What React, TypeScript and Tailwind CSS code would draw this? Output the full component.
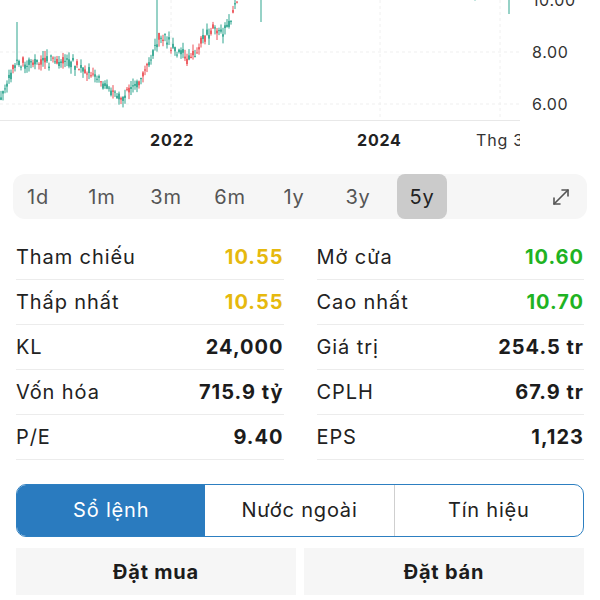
import React from "react";
import { MoveDiagonal } from "lucide-react";

type Candle = { x: number; o: number; c: number; h: number; l: number };

function rng(seed: number) {
  let s = seed;
  return () => {
    s = (s * 1664525 + 1013904223) % 4294967296;
    return s / 4294967296;
  };
}

const keys: [number, number][] = [
  [0, 102], [5, 85], [12, 75], [16, 60], [22, 64], [40, 62], [60, 62], [80, 66],
  [95, 78], [110, 88], [122, 100], [135, 86], [148, 68], [155, 52], [160, 36],
  [168, 40], [176, 48], [186, 60], [195, 56], [202, 42], [212, 30], [222, 34],
  [230, 26], [245, -25], [262, -20], [280, -45], [460, -45], [472, -10], [490, -25],
  [505, -20], [512, -6], [520, -15],
];

function interp(x: number) {
  for (let i = 0; i < keys.length - 1; i++) {
    const [x0, y0] = keys[i];
    const [x1, y1] = keys[i + 1];
    if (x >= x0 && x <= x1) return y0 + ((y1 - y0) * (x - x0)) / (x1 - x0);
  }
  return keys[keys.length - 1][1];
}

const spikes: Record<number, number> = { 17: 22, 157: 0, 261: 0, 471: -5, 509: -5 };
const spikeLow: Record<number, number> = { 261: 22, 509: 14 };

function makeCandles(): Candle[] {
  const r = rng(7);
  const out: Candle[] = [];
  for (let x = 1; x < 520; x += 2) {
    const m = interp(x) + (r() - 0.5) * 8;
    let o = m + (r() - 0.5) * 8;
    let c = m + (r() - 0.5) * 8;
    if (c > o && r() < 0.45) {
      const t = o;
      o = c;
      c = t;
    }
    let h = Math.min(o, c) - r() * 7;
    let l = Math.max(o, c) + r() * 7;
    const sk = Object.keys(spikes).map(Number).find((k) => Math.abs(k - x) <= 1);
    if (sk !== undefined) {
      h = spikes[sk];
      if (spikeLow[sk] !== undefined) l = spikeLow[sk];
    }
    out.push({ x, o, c, h, l });
  }
  return out;
}

const candles = makeCandles();

function Chart() {
  return (
    <div className="flex h-[160px]">
      <div className="relative w-[520px] overflow-hidden">
        <svg width="520" height="121" className="block">
          <line x1="0" y1="52" x2="520" y2="52" stroke="#efefef" strokeDasharray="3 3" />
          <line x1="0" y1="104" x2="520" y2="104" stroke="#efefef" strokeDasharray="3 3" />
          <line x1="171" y1="0" x2="171" y2="120" stroke="#f0f0f0" strokeDasharray="3 3" />
          <line x1="380" y1="0" x2="380" y2="120" stroke="#f0f0f0" strokeDasharray="3 3" />
          <line x1="500" y1="0" x2="500" y2="120" stroke="#f0f0f0" strokeDasharray="3 3" />
          {candles.map((cd, i) => {
            const up = cd.c <= cd.o;
            const col = up ? "#2ea58f" : "#ec4f55";
            const top = Math.min(cd.o, cd.c);
            const bh = Math.max(1, Math.abs(cd.o - cd.c));
            return (
              <g key={i}>
                <line x1={cd.x} x2={cd.x} y1={cd.h} y2={cd.l} stroke={col} strokeWidth="1" />
                <rect x={cd.x - 0.8} y={top} width="1.6" height={bh} fill={col} />
              </g>
            );
          })}
          <line x1="0" y1="120.5" x2="520" y2="120.5" stroke="#e8e8e8" strokeWidth="1" />
        </svg>
        <span className="absolute left-[150px] top-[130px] text-[16px] font-bold leading-[20px] tracking-[0.8px] text-[#222]">2022</span>
        <span className="absolute left-[357px] top-[130px] text-[16px] font-bold leading-[20px] tracking-[0.8px] text-[#222]">2024</span>
        <span className="absolute left-[476px] top-[130px] whitespace-nowrap text-[16px] leading-[20px] tracking-[0.8px] text-[#333]">Thg 3</span>
      </div>
      <div className="relative flex-1 text-[16px] leading-[20px] tracking-[0.6px] text-[#333]">
        <span className="absolute left-[12px] top-[-10px]">10.00</span>
        <span className="absolute left-[12px] top-[42px]">8.00</span>
        <span className="absolute left-[12px] top-[94px]">6.00</span>
      </div>
    </div>
  );
}

const ranges = ["1d", "1m", "3m", "6m", "1y", "3y", "5y"];

function RangeBar() {
  return (
    <div className="mx-[13px] mt-[14px] flex h-[45px] items-center rounded-[12px] bg-[#f6f6f6]">
      <div className="flex h-full gap-[14px]">
        {ranges.map((r) => (
          <div
            key={r}
            className={`flex h-full w-[50px] items-center justify-center rounded-[8px] text-[20px] tracking-[0.8px] ${
              r === "5y" ? "bg-[#cbcbcb] text-[#222]" : "text-[#555]"
            }`}
          >
            {r}
          </div>
        ))}
      </div>
      <div className="ml-auto mr-[14px] flex items-center text-[#555]">
        <MoveDiagonal size={24} strokeWidth={1.6} />
      </div>
    </div>
  );
}

type Stat = { label: string; value: string; color?: string };

const left: Stat[] = [
  { label: "Tham chiếu", value: "10.55", color: "text-[#e6b90e]" },
  { label: "Thấp nhất", value: "10.55", color: "text-[#e6b90e]" },
  { label: "KL", value: "24,000" },
  { label: "Vốn hóa", value: "715.9 tỷ" },
  { label: "P/E", value: "9.40" },
];
const right: Stat[] = [
  { label: "Mở cửa", value: "10.60", color: "text-[#1fb323]" },
  { label: "Cao nhất", value: "10.70", color: "text-[#1fb323]" },
  { label: "Giá trị", value: "254.5 tr" },
  { label: "CPLH", value: "67.9 tr" },
  { label: "EPS", value: "1,123" },
];

function StatCol({ items }: { items: Stat[] }) {
  return (
    <div className="flex flex-col">
      {items.map((s) => (
        <div key={s.label} className="flex h-[45px] items-center justify-between border-b border-[#ececec]">
          <span className="text-[20px] tracking-[0.9px] text-[#222]">{s.label}</span>
          <span className={`text-[20px] font-bold tracking-[1px] ${s.color ?? "text-[#1c1c1c]"}`}>{s.value}</span>
        </div>
      ))}
    </div>
  );
}

export default function App() {
  return (
    <div className="h-[600px] w-[600px] overflow-hidden bg-white font-['Inter',sans-serif]">
      <Chart />
      <RangeBar />
      <div className="mx-[16px] mt-[16px] grid grid-cols-2 gap-[33px]">
        <StatCol items={left} />
        <StatCol items={right} />
      </div>
      <div className="mx-[16px] mt-[24px] flex h-[53px] overflow-hidden rounded-[10px] border-[1.5px] border-[#2d7fc1]">
        <div className="flex flex-1 items-center justify-center pb-[2px] bg-[#2a7bbf] text-[20px] tracking-[0.8px] text-white">Sổ lệnh</div>
        <div className="flex flex-1 items-center justify-center pb-[2px] border-r border-[#cfcfcf] text-[20px] tracking-[0.8px] text-[#222]">Nước ngoài</div>
        <div className="flex flex-1 items-center justify-center pb-[2px] text-[20px] tracking-[0.8px] text-[#222]">Tín hiệu</div>
      </div>
      <div className="mx-[16px] mt-[11px] grid grid-cols-2 gap-[8px]">
        <div className="flex h-[47px] items-center justify-center bg-[#f6f6f6] text-[20px] font-bold tracking-[0.8px] text-[#1c1c1c]">Đặt mua</div>
        <div className="flex h-[47px] items-center justify-center bg-[#f6f6f6] text-[20px] font-bold tracking-[0.8px] text-[#1c1c1c]">Đặt bán</div>
      </div>
    </div>
  );
}
